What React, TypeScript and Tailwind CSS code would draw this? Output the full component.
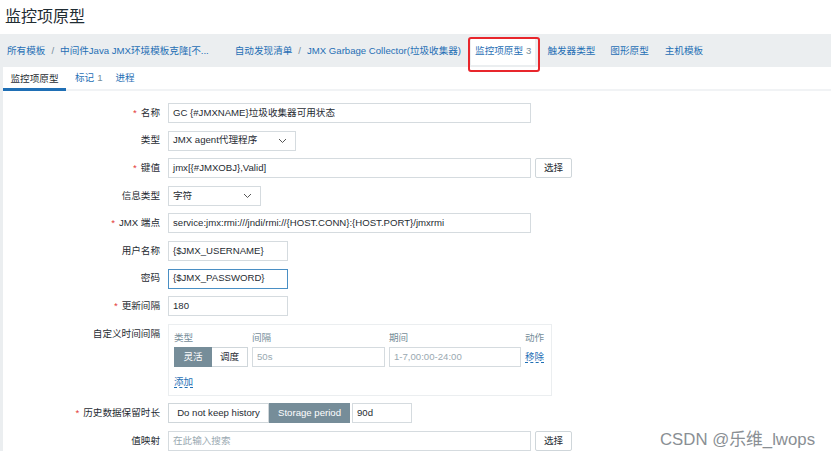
import React from 'react';

const link = 'text-[#1f6fb5]';

function Chevron() {
  return (
    <svg width="9" height="6" viewBox="0 0 9 6" className="text-[#555]">
      <path d="M1 1l3.5 3.5L8 1" fill="none" stroke="currentColor" strokeWidth="1" />
    </svg>
  );
}

function Label({ text, req }: { text: string; req?: boolean }) {
  return (
    <div className="w-[157px] shrink-0 text-right text-[#1f2c33]">
      {req && <span className="text-[#e33734] mr-[4px]">*</span>}
      {text}
    </div>
  );
}

function Input({ value, w, placeholder, focus }: { value?: string; w: string; placeholder?: string; focus?: boolean }) {
  return (
    <div
      className={`${w} h-[20px] flex items-center px-[4px] bg-white border ${
        focus ? 'border-[#4a8fc4]' : 'border-[#d5dbdf]'
      } ${value ? 'text-[#1f2c33]' : 'text-[#9aa9b1]'} whitespace-nowrap overflow-hidden`}
    >
      {value ?? placeholder}
    </div>
  );
}

function Select({ value, w }: { value: string; w: string }) {
  return (
    <div className={`${w} h-[20px] flex items-center justify-between pl-[4px] pr-[8px] bg-white border border-[#d5dbdf] text-[#1f2c33]`}>
      <span>{value}</span>
      <Chevron />
    </div>
  );
}

function Btn({ text }: { text: string }) {
  return (
    <div className="h-[20px] w-[37px] flex items-center justify-center bg-white border border-[#cfd6da] rounded-[2px] text-[#1f2c33]">
      {text}
    </div>
  );
}

function Row({ label, req, children, top }: { label: string; req?: boolean; children: React.ReactNode; top?: boolean }) {
  return (
    <div className={`flex ${top ? 'items-start' : 'items-center'} gap-[8px]`}>
      <div className={top ? 'pt-[3px]' : ''}>
        <Label text={label} req={req} />
      </div>
      {children}
    </div>
  );
}

export default function App() {
  return (
    <div className="relative w-[831px] h-[455px] overflow-hidden bg-white font-['Liberation_Sans','Noto_Sans_CJK_SC',sans-serif] text-[9.6px] text-[#1f2c33]">
      {/* title */}
      <div className="h-[34px] pl-[5px] flex items-center text-[16px] text-[#1f2c33]">监控项原型</div>

      {/* breadcrumbs */}
      <div className="h-[33px] bg-[#ebeef0] flex items-center pl-[7px] pt-[2px] whitespace-nowrap">
        <span className={link}>所有模板</span>
        <span className="mx-[6px] text-[#768d99]">/</span>
        <span className={link}>中间件Java JMX环境模板克隆[不...</span>
        <span className={`${link} ml-[26px]`}>自动发现清单</span>
        <span className="mx-[6px] text-[#768d99]">/</span>
        <span className={link}>JMX Garbage Collector(垃圾收集器)</span>
        <span className="ml-[10px] h-[26px] px-[4px] flex items-center bg-white">
          <span className={link}>监控项原型</span>
          <span className="ml-[3px] text-[#768d99]">3</span>
        </span>
        <span className={`${link} ml-[12px]`}>触发器类型</span>
        <span className={`${link} ml-[15px]`}>图形原型</span>
        <span className={`${link} ml-[16px]`}>主机模板</span>
      </div>

      {/* red annotation box */}
      <div className="absolute left-[468px] top-[37px] w-[72px] h-[35px] border-2 border-[#e8262c] rounded-[3px]" />

      <div className="border-l-[3px] border-[#ebeef0]">
        {/* tabs */}
        <div className="h-[24px] flex items-end border-b-2 border-[#f1f3f5]">
          <div className="h-[24px] w-[63px] pt-[3px] flex items-center justify-center border-b-[3px] border-[#1f6fb5] -mb-[2px] text-[#1f2c33]">
            监控项原型
          </div>
          <div className="h-[24px] pt-[3px] flex items-center ml-[9px]">
            <span className={link}>标记</span>
            <span className="ml-[3px] text-[#768d99]">1</span>
          </div>
          <div className={`h-[24px] pt-[3px] flex items-center ml-[13px] ${link}`}>进程</div>
        </div>

        {/* form */}
        <div className="flex flex-col gap-[7.6px] pt-[12px]">
          <Row label="名称" req>
            <Input w="w-[363px]" value="GC {#JMXNAME}垃圾收集器可用状态" />
          </Row>
          <Row label="类型">
            <Select w="w-[128px]" value="JMX agent代理程序" />
          </Row>
          <Row label="键值" req>
            <div className="flex items-center gap-[4px]">
              <Input w="w-[363px]" value="jmx[{#JMXOBJ},Valid]" />
              <Btn text="选择" />
            </div>
          </Row>
          <Row label="信息类型">
            <Select w="w-[93px]" value="字符" />
          </Row>
          <Row label="JMX 端点" req>
            <Input w="w-[363px]" value="service:jmx:rmi:///jndi/rmi://{HOST.CONN}:{HOST.PORT}/jmxrmi" />
          </Row>
          <Row label="用户名称">
            <Input w="w-[120px]" value="{$JMX_USERNAME}" />
          </Row>
          <Row label="密码">
            <Input w="w-[120px]" value="{$JMX_PASSWORD}" focus />
          </Row>
          <Row label="更新间隔" req>
            <Input w="w-[120px]" value="180" />
          </Row>
          <Row label="自定义时间间隔" top>
            <div className="w-[384px] h-[72px] border border-[#ebeef0] px-[5px] pt-[5px]">
              <div className="flex text-[#768d99] h-[16px] items-center">
                <span className="w-[78px]">类型</span>
                <span className="w-[137px]">间隔</span>
                <span className="w-[136px]">期间</span>
                <span>动作</span>
              </div>
              <div className="flex items-center mt-[1px] h-[20px]">
                <div className="flex h-[20px]">
                  <div className="w-[38px] flex items-center justify-center bg-[#768d99] text-white">灵活</div>
                  <div className="w-[36px] flex items-center justify-center border border-[#cfd6da] border-l-0 bg-white">调度</div>
                </div>
                <div className="ml-[4px]">
                  <Input w="w-[133px]" placeholder="50s" />
                </div>
                <div className="ml-[4px]">
                  <Input w="w-[132px]" placeholder="1-7,00:00-24:00" />
                </div>
                <span className={`ml-[4px] ${link} border-b border-dashed border-[#1f6fb5] leading-[11px]`}>移除</span>
              </div>
              <div className="mt-[8px]">
                <span className={`${link} border-b border-dashed border-[#1f6fb5] leading-[11px] inline-block`}>添加</span>
              </div>
            </div>
          </Row>
          <Row label="历史数据保留时长" req>
            <div className="flex items-center">
              <div className="flex h-[20px]">
                <div className="w-[101px] flex items-center justify-center border border-[#cfd6da] bg-white">Do not keep history</div>
                <div className="w-[81px] flex items-center justify-center bg-[#768d99] text-white">Storage period</div>
              </div>
              <div className="ml-[2px]">
                <Input w="w-[60px]" value="90d" />
              </div>
            </div>
          </Row>
          <Row label="值映射">
            <div className="flex items-center gap-[4px]">
              <Input w="w-[363px]" placeholder="在此输入搜索" />
              <Btn text="选择" />
            </div>
          </Row>
        </div>
      </div>

      {/* watermark */}
      <div className="absolute left-[660px] top-[427px] text-[16.8px] text-[#8a8f94] whitespace-nowrap">
        CSDN @乐维_lwops
      </div>
    </div>
  );
}
